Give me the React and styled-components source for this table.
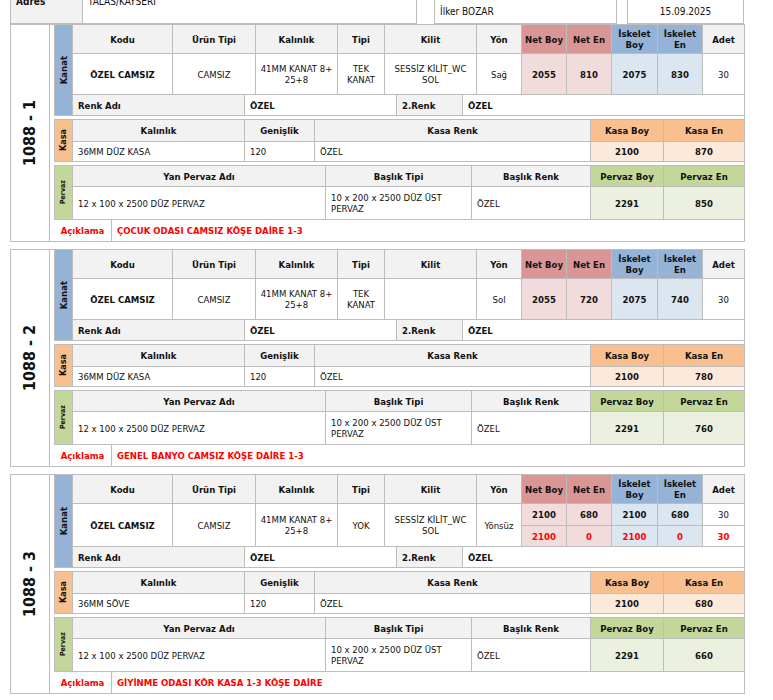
import React from "react";
import styled, { createGlobalStyle } from "styled-components";

const LINE = "#bdbdbd";
const HEAD = "#f2f2f2";

const GlobalStyle = createGlobalStyle`
  * { box-sizing: border-box; }
  body {
    margin: 0;
    background: #fff;
    color: #111;
    font-family: "DejaVu Sans Condensed", "DejaVu Sans", Tahoma, sans-serif;
    font-size: 9.5px;
    line-height: 11px;
  }
`;

const Page = styled.div`
  width: 773px;
  height: 700px;
  overflow: hidden;
`;

const Header = styled.div`
  display: flex;
  height: 45px;
  margin: -21px 0 0 10px;
`;

const HeadCell = styled.div`
  display: flex;
  align-items: ${(p) => (p.$bottom ? "flex-end" : "center")};
  justify-content: ${(p) => (p.$center ? "center" : "flex-start")};
  width: ${(p) => p.$w}px;
  padding: ${(p) => (p.$bottom ? "0 5px 6px" : "0 5px")};
  font-size: 10px;
  font-weight: ${(p) => (p.$bold ? 700 : 400)};
  background: ${(p) => (p.$gray ? HEAD : "#fff")};
  border-bottom: ${(p) => (p.$noBorder ? "0" : `1px solid ${LINE}`)};
  border-left: ${(p) => (p.$left ? `1px solid ${LINE}` : "0")};
  border-right: ${(p) => (p.$right ? `1px solid ${LINE}` : "0")};
`;

const Block = styled.div`
  display: flex;
  width: 735px;
  margin: 0 0 7px 10px;
  border: 1px solid ${LINE};
`;

const NumCol = styled.div`
  width: 39px;
  flex: none;
  display: flex;
  align-items: center;
  justify-content: center;
  border-right: 1px solid ${LINE};
`;

const Vertical = styled.span`
  writing-mode: vertical-rl;
  transform: rotate(180deg);
  white-space: nowrap;
  font-weight: 700;
  font-size: ${(p) => p.$size}px;
  line-height: 1;
`;

const Content = styled.div`
  flex: 1;
  padding-left: 4px;
  display: flex;
  flex-direction: column;
`;

const Section = styled.div`
  display: flex;
  border-left: 1px solid ${LINE};
  border-top: ${(p) => (p.$first ? "0" : `1px solid ${LINE}`)};
  margin-top: ${(p) => (p.$first ? 0 : 3)}px;
`;

const Label = styled.div`
  width: 18px;
  flex: none;
  display: flex;
  align-items: center;
  justify-content: center;
  background: ${(p) => p.$bg};
  border-right: 1px solid ${LINE};
  border-bottom: 1px solid ${LINE};
`;

const Rows = styled.div`
  flex: 1;
  display: flex;
  flex-direction: column;
`;

const Row = styled.div`
  display: grid;
  grid-template-columns: ${(p) => p.$cols};
  height: ${(p) => p.$h}px;
  border-bottom: ${(p) => (p.$last ? "0" : `1px solid ${LINE}`)};
`;

const Cell = styled.div`
  display: flex;
  align-items: center;
  justify-content: ${(p) => (p.$left ? "flex-start" : "center")};
  text-align: ${(p) => (p.$left ? "left" : "center")};
  padding: 0 ${(p) => (p.$left ? 5 : 3)}px;
  font-weight: ${(p) => (p.$bold ? 700 : 400)};
  color: ${(p) => (p.$red ? "#ff0000" : "#111")};
  background: ${(p) => p.$bg || "#fff"};
  border-right: 1px solid ${LINE};
  &:last-child {
    border-right: 0;
  }
`;

const Split = styled.div`
  display: grid;
  grid-template-rows: 1fr 1fr;
  border-right: 1px solid ${LINE};
  &:last-child {
    border-right: 0;
  }
`;

const SplitCell = styled(Cell)`
  border-right: 0;
  & + & {
    border-top: 1px solid ${LINE};
  }
`;

const C = {
  netH: "#da9694",
  net: "#f2dcdb",
  iskH: "#95b3d7",
  isk: "#dce6f1",
  kasaH: "#fabf8f",
  kasa: "#fde9d9",
  pervH: "#c4d79b",
  perv: "#ebf1de",
};

const KANAT_COLS = "100px 83px 82px 47px 92px 45px 45px 45px 46px 45px 1fr";
const RENK_COLS = "172px 152px 66px 1fr";
const KASA_COLS = "172px 70px 276px 73px 1fr";
const PERV_COLS = "253px 146px 119px 73px 1fr";

const orders = [
  {
    no: "1088 - 1",
    tipi: "TEK KANAT",
    kilit: "SESSİZ KİLİT_WC SOL",
    yon: "Sağ",
    sizes: [["2055", "810", "2075", "830", "30"]],
    kasa: "36MM DÜZ KASA",
    kasaBoy: "2100",
    kasaEn: "870",
    pervEn: "850",
    note: "ÇOCUK ODASI CAMSIZ KÖŞE DAİRE 1-3",
  },
  {
    no: "1088 - 2",
    tipi: "TEK KANAT",
    kilit: "",
    yon: "Sol",
    sizes: [["2055", "720", "2075", "740", "30"]],
    kasa: "36MM DÜZ KASA",
    kasaBoy: "2100",
    kasaEn: "780",
    pervEn: "760",
    note: "GENEL BANYO CAMSIZ KÖŞE DAİRE 1-3",
  },
  {
    no: "1088 - 3",
    tipi: "YOK",
    kilit: "SESSİZ KİLİT_WC SOL",
    yon: "Yönsüz",
    sizes: [
      ["2100", "680", "2100", "680", "30"],
      ["2100", "0", "2100", "0", "30"],
    ],
    kasa: "36MM SÖVE",
    kasaBoy: "2100",
    kasaEn: "680",
    pervEn: "660",
    note: "GİYİNME ODASI KÖR KASA 1-3  KÖŞE DAİRE",
  },
];

const sizeBg = [C.net, C.net, C.isk, C.isk, "#fff"];

function SizeCells({ sizes }) {
  if (sizes.length === 1) {
    return sizes[0].map((v, i) => (
      <Cell key={i} $bold={i < 4} $bg={sizeBg[i]}>
        {v}
      </Cell>
    ));
  }
  return sizeBg.map((bg, i) => (
    <Split key={i}>
      {sizes.map((s, r) => (
        <SplitCell key={r} $bold={i < 4 || r > 0} $red={r > 0} $bg={bg}>
          {s[i]}
        </SplitCell>
      ))}
    </Split>
  ));
}

function OrderBlock({ o }) {
  const tall = o.sizes.length > 1;
  return (
    <Block>
      <NumCol>
        <Vertical $size={16}>{o.no}</Vertical>
      </NumCol>
      <Content>
        <Section $first>
          <Label $bg={C.iskH}>
            <Vertical $size={9.5}>Kanat</Vertical>
          </Label>
          <Rows>
            <Row $cols={KANAT_COLS} $h={29}>
              <Cell $bold $bg={HEAD}>Kodu</Cell>
              <Cell $bold $bg={HEAD}>Ürün Tipi</Cell>
              <Cell $bold $bg={HEAD}>Kalınlık</Cell>
              <Cell $bold $bg={HEAD}>Tipi</Cell>
              <Cell $bold $bg={HEAD}>Kilit</Cell>
              <Cell $bold $bg={HEAD}>Yön</Cell>
              <Cell $bold $bg={C.netH}>Net Boy</Cell>
              <Cell $bold $bg={C.netH}>Net En</Cell>
              <Cell $bold $bg={C.iskH}>İskelet Boy</Cell>
              <Cell $bold $bg={C.iskH}>İskelet En</Cell>
              <Cell $bold $bg={HEAD}>Adet</Cell>
            </Row>
            <Row $cols={KANAT_COLS} $h={tall ? 43 : 41}>
              <Cell $bold>ÖZEL CAMSIZ</Cell>
              <Cell>CAMSIZ</Cell>
              <Cell>41MM KANAT 8+ 25+8</Cell>
              <Cell>{o.tipi}</Cell>
              <Cell>{o.kilit}</Cell>
              <Cell>{o.yon}</Cell>
              <SizeCells sizes={o.sizes} />
            </Row>
            <Row $cols={RENK_COLS} $h={21}>
              <Cell $left $bold $bg={HEAD}>Renk Adı</Cell>
              <Cell $left $bold>ÖZEL</Cell>
              <Cell $left $bold $bg={HEAD}>2.Renk</Cell>
              <Cell $left $bold>ÖZEL</Cell>
            </Row>
          </Rows>
        </Section>

        <Section>
          <Label $bg={C.kasaH}>
            <Vertical $size={9}>Kasa</Vertical>
          </Label>
          <Rows>
            <Row $cols={KASA_COLS} $h={22}>
              <Cell $bold $bg={HEAD}>Kalınlık</Cell>
              <Cell $bold $bg={HEAD}>Genişlik</Cell>
              <Cell $bold $bg={HEAD}>Kasa Renk</Cell>
              <Cell $bold $bg={C.kasaH}>Kasa Boy</Cell>
              <Cell $bold $bg={C.kasaH}>Kasa En</Cell>
            </Row>
            <Row $cols={KASA_COLS} $h={20}>
              <Cell $left>{o.kasa}</Cell>
              <Cell $left>120</Cell>
              <Cell $left>ÖZEL</Cell>
              <Cell $bold $bg={C.kasa}>{o.kasaBoy}</Cell>
              <Cell $bold $bg={C.kasa}>{o.kasaEn}</Cell>
            </Row>
          </Rows>
        </Section>

        <Section>
          <Label $bg={C.pervH}>
            <Vertical $size={7}>Pervaz</Vertical>
          </Label>
          <Rows>
            <Row $cols={PERV_COLS} $h={21}>
              <Cell $bold $bg={HEAD}>Yan Pervaz Adı</Cell>
              <Cell $bold $bg={HEAD}>Başlık Tipi</Cell>
              <Cell $bold $bg={HEAD}>Başlık Renk</Cell>
              <Cell $bold $bg={C.pervH}>Pervaz Boy</Cell>
              <Cell $bold $bg={C.pervH}>Pervaz En</Cell>
            </Row>
            <Row $cols={PERV_COLS} $h={33}>
              <Cell $left>12 x 100 x 2500 DÜZ PERVAZ</Cell>
              <Cell $left>10 x 200 x 2500 DÜZ ÜST PERVAZ</Cell>
              <Cell $left>ÖZEL</Cell>
              <Cell $bold $bg={C.perv}>2291</Cell>
              <Cell $bold $bg={C.perv}>{o.pervEn}</Cell>
            </Row>
          </Rows>
        </Section>

        <Row $cols="58px 1fr" $h={21} $last>
          <Cell $bold $red>Açıklama</Cell>
          <Cell $left $bold $red>{o.note}</Cell>
        </Row>
      </Content>
    </Block>
  );
}

export default function App() {
  return (
    <Page>
      <GlobalStyle />
      <Header>
        <HeadCell $w={73} $bold $gray $left $right>Adres</HeadCell>
        <HeadCell $w={334} $right>TALAS/KAYSERİ</HeadCell>
        <HeadCell $w={17} $noBorder />
        <HeadCell $w={183} $left $right $bottom>İlker BOZAR</HeadCell>
        <HeadCell $w={7} $noBorder />
        <HeadCell $w={117} $left $right $bottom $center>15.09.2025</HeadCell>
      </Header>
      {orders.map((o) => (
        <OrderBlock key={o.no} o={o} />
      ))}
    </Page>
  );
}
